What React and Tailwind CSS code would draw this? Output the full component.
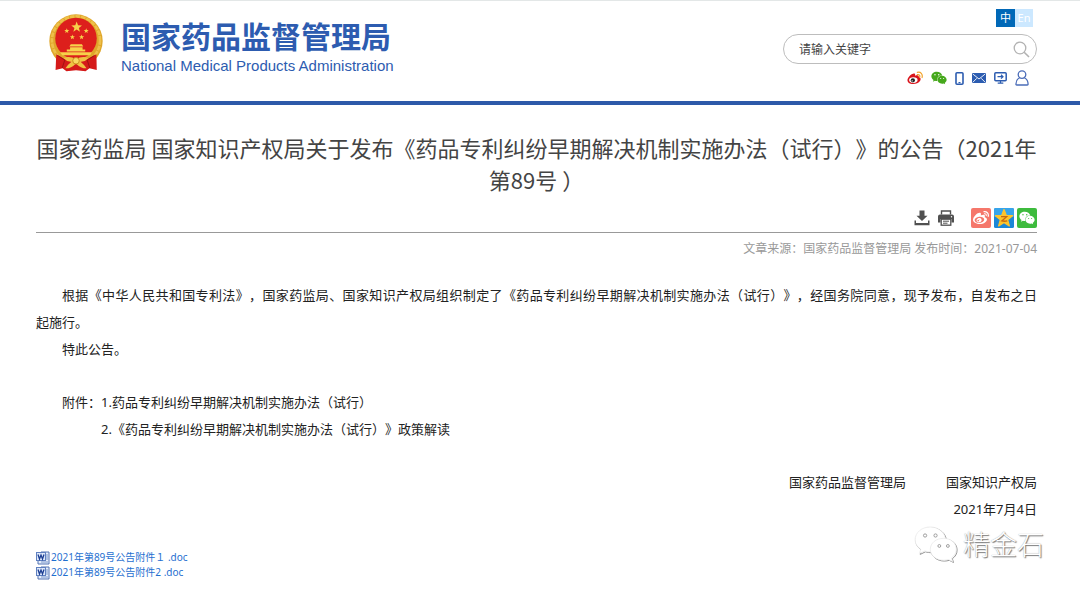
import React from 'react';
import { FaWeibo, FaWeixin } from 'react-icons/fa';

const star = (cx, cy, r) =>
  Array.from({ length: 10 }, (_, i) => {
    const a = (Math.PI / 5) * i - Math.PI / 2;
    const k = i % 2 ? r * 0.42 : r;
    return `${(cx + k * Math.cos(a)).toFixed(2)},${(cy + k * Math.sin(a)).toFixed(2)}`;
  }).join(' ');

function Emblem() {
  return (
    <svg viewBox="0 0 164 176" className="h-[58px] w-[54px] shrink-0" aria-hidden="true">
      <circle cx="82" cy="82" r="81" fill="#dfa62a" />
      <circle cx="82" cy="80" r="73" fill="none" stroke="#eec04a" strokeWidth="8" strokeDasharray="14 3" />
      <circle cx="82" cy="74" r="63" fill="#dd1f1c" />
      <g fill="#f7d24a">
        <polygon points={star(84, 40, 17)} />
        <polygon points={star(54, 51, 8)} />
        <polygon points={star(113, 51, 8)} />
        <polygon points={star(71, 70, 8)} />
        <polygon points={star(99, 70, 8)} />
        <path d="M66 92h34l4 7H62zM64 101h38v7h8v6H54v-6h10zM34 116h96l-5 9H40z" />
      </g>
      <path d="M22 122l24 14 36-4 36 4 26-14 1 48-22-5-12 9-29-3-29 3-12-9-21 5z" fill="#d51a1a" />
      <path d="M44 134q20-8 38 4 18-12 38-4-12 12-24 11 10 8 18 20-18 0-32-15-14 15-32 15 8-12 18-20-12 1-24-11z" fill="#efc143" />
      <circle cx="82" cy="142" r="10" fill="#f8d860" stroke="#c98b1c" strokeWidth="3" />
      <path d="M26 126l22 14-8 24M138 126l-22 14 8 24" fill="none" stroke="#9c1212" strokeWidth="3" />
    </svg>
  );
}

function WeiboColor() {
  return (
    <svg viewBox="0 0 34 28" className="h-[14px] w-4" aria-hidden="true">
      <path d="M13 5c3-1 5 0 4 4 4-2 9-1 8 3 4 1 5 4 3 8-3 5-9 7-15 7C6 27 1 24 1 19 1 13 8 6 13 5z" fill="#d9141b" />
      <ellipse cx="13.500" cy="18.500" rx="9" ry="6" fill="#fff" />
      <circle cx="12.500" cy="19" r="4.500" fill="#222" />
      <circle cx="11" cy="20" r="1.400" fill="#fff" />
      <path d="M22 2c7-2 12 4 10 11M22 7c4-1 6 2 5 5" fill="none" stroke="#f3a32c" strokeWidth="2.600" strokeLinecap="round" />
    </svg>
  );
}

function PhoneIcon() {
  return (
    <svg viewBox="0 0 9 13" className="h-[13px] w-[9px]" aria-hidden="true">
      <rect x="1" y="0.800" width="7" height="11.400" rx="1" fill="none" stroke="#2c5cb0" strokeWidth="1.600" />
      <path d="M3.500 10.600h2" stroke="#2c5cb0" strokeWidth="1.200" />
    </svg>
  );
}

function MailIcon() {
  return (
    <svg viewBox="0 0 14 10" className="h-[10px] w-[14px]" aria-hidden="true">
      <rect width="14" height="10" rx="0.800" fill="#2c5cb0" />
      <path d="M0.800 1l6.200 5 6.200-5M0.800 9.300l4-4M13.200 9.300l-4-4" fill="none" stroke="#fff" strokeWidth="0.900" />
    </svg>
  );
}

function ScreenIcon() {
  return (
    <svg viewBox="0 0 13 12" className="h-[12px] w-[13px]" aria-hidden="true">
      <rect x="0.800" y="0.800" width="11.400" height="7.900" rx="1" fill="none" stroke="#2c5cb0" strokeWidth="1.500" />
      <path d="M3.500 4.700h5.500M7 2.800l2 1.900-2 1.900M6.500 8.700v2M3.700 11.200h5.600" fill="none" stroke="#2c5cb0" strokeWidth="1.200" />
    </svg>
  );
}

function UserIcon() {
  return (
    <svg viewBox="0 0 14 16" className="h-[16px] w-[14px]" aria-hidden="true">
      <circle cx="7" cy="4.600" r="3.800" fill="none" stroke="#4a6cb8" strokeWidth="1.300" />
      <path d="M4.500 8C2 9 1 11 0.900 14.200q0 0.800 0.800 0.800h10.600q0.800 0 0.800-0.800C13 11 12 9 9.500 8" fill="none" stroke="#4a6cb8" strokeWidth="1.300" />
    </svg>
  );
}

function DownloadIcon() {
  return (
    <svg viewBox="0 0 16 16" className="h-4 w-4" aria-hidden="true" fill="#505050">
      <path d="M5.500 0.500h5v5.200h3L8 11 2.500 5.700h3z" />
      <path d="M0.500 10.500H2V13h12v-2.500h1.500v4.800h-15z" />
    </svg>
  );
}

function PrintIcon() {
  return (
    <svg viewBox="0 0 16 16" className="h-4 w-4" aria-hidden="true">
      <path d="M3.500 4.500V1h9v3.500" fill="none" stroke="#505050" strokeWidth="1.400" />
      <path d="M2 4.500h12q2 0 2 2v6h-2.500V9h-11v3.500H0v-6q0-2 2-2z" fill="#505050" />
      <circle cx="13.500" cy="6.700" r="0.700" fill="#fff" />
      <rect x="3.200" y="9.200" width="9.600" height="6" fill="#fff" stroke="#505050" strokeWidth="1.300" />
      <path d="M5 11.200h6M5 13.200h4.500" stroke="#505050" />
    </svg>
  );
}

function QzoneIcon() {
  return (
    <svg viewBox="0 0 20 20" className="h-5 w-5" aria-hidden="true">
      <rect width="20" height="20" rx="1.500" fill="#1c87d6" />
      <rect width="20" height="9" rx="1.500" fill="#37a4ea" />
      <polygon points={star(10, 10.6, 9)} fill="#fdc42c" stroke="#fdc42c" strokeWidth="1.400" strokeLinejoin="round" />
      <path d="M7 8.700h5.600l-4.800 4.200q2.500 0.700 5.400 0" fill="none" stroke="#c8690c" strokeWidth="1.300" />
    </svg>
  );
}

function WordIcon() {
  return (
    <svg viewBox="0 0 14 14" className="h-[14px] w-[14px] shrink-0" aria-hidden="true">
      <path d="M5 1h8v12H2V9" fill="#e6eefb" stroke="#5373b3" />
      <path d="M10 4h2M10 6h2M10 8h2M5 11h7" stroke="#7b97cb" />
      <rect x="0.500" y="1.500" width="9" height="8" fill="#dfe9fb" stroke="#5f80c0" />
      <path d="M2 3.500l1.500 4.500L5 4l1.500 4L8 3.500" fill="none" stroke="#1d3f93" strokeWidth="1.300" />
    </svg>
  );
}

function WatermarkIcon() {
  const shapes = (
    <>
      <path d="M17 1C8 1 1 7 1 14.500c0 4 2 7.500 6 10L5.500 29l5.500-2.700c2 .6 4 .9 6 .9 9 0 16-5.700 16-12.700S26 1 17 1z" />
      <path d="M31 13c-8 0-14 5-14 11.500S23 36 31 36c1.800 0 3.500-.3 5-.8l4.500 2.300-1.200-4c3.200-2.200 5-5.300 5-9C44.300 18 39 13 31 13z" />
    </>
  );
  return (
    <svg viewBox="0 0 46 40" className="h-[38px] w-[44px]" aria-hidden="true">
      <g transform="translate(0.9 0.9)" fill="#fff" stroke="#8c8c8c" strokeWidth="1">{shapes}</g>
      <g fill="#fff" stroke="#e6e6e6" strokeWidth="0.700">{shapes}</g>
      <g fill="#fff" stroke="#8f8f8f" strokeWidth="0.900">
        <circle cx="11.500" cy="10" r="1.700" />
        <circle cx="22.500" cy="10" r="1.700" />
        <circle cx="26.500" cy="21" r="1.500" />
        <circle cx="35.500" cy="21" r="1.500" />
      </g>
    </svg>
  );
}

const quickLinks = [
  { label: '微博', icon: <WeiboColor /> },
  { label: '微信', icon: <FaWeixin className="h-4 w-4 text-[#46a81c]" /> },
  { label: '手机版', icon: <PhoneIcon /> },
  { label: '邮箱', icon: <MailIcon /> },
  { label: '电脑版', icon: <ScreenIcon /> },
  { label: '个人中心', icon: <UserIcon /> },
];

const attachments = ['2021年第89号公告附件１ .doc', '2021年第89号公告附件2 .doc'];

function Header() {
  return (
    <header className="flex items-start justify-between border-t border-b-4 border-t-[#e3e7e7] border-b-[#2d59a9] pr-[43px] pb-[15px] pl-[49px]">
      <a href="#home" className="flex gap-[18px] pt-[13px] text-[#2d5cb0]">
        <Emblem />
        <span className="flex flex-col pt-1">
          <span className="text-[30px] leading-[38px] font-bold">国家药品监督管理局</span>
          <span className="font-['Liberation_Sans',sans-serif] text-[15px] leading-[20px]">National Medical Products Administration</span>
        </span>
      </a>
      <div className="flex w-[254px] flex-col items-end pt-2">
        <div className="mr-1 flex text-[11px] leading-[18px] text-white">
          <button type="button" className="w-[19px] bg-[#0068b7]">中</button>
          <button type="button" className="w-[18px] bg-[#cce8ff]">En</button>
        </div>
        <form className="mt-[7px] flex h-[30px] w-full items-center rounded-full border border-[#bdbdbd] pr-[6px] pl-[15px]" onSubmit={(e) => e.preventDefault()}>
          <input aria-label="请输入关键字" placeholder="请输入关键字" className="min-w-0 flex-1 pt-px text-[12px] outline-none placeholder:text-[#444]" />
          <button type="submit" aria-label="搜索">
            <svg viewBox="0 0 17 17" className="h-[17px] w-[17px]" fill="none" stroke="#b2b2b2" strokeWidth="1.300" aria-hidden="true">
              <circle cx="7" cy="7" r="5.800" />
              <path d="M11.200 11.200l4.800 4.800" strokeWidth="1.600" />
            </svg>
          </button>
        </form>
        <nav className="mt-[6px] mr-2 flex h-4 items-center gap-2">
          {quickLinks.map((l) => (
            <a key={l.label} href="#quick" aria-label={l.label}>{l.icon}</a>
          ))}
        </nav>
      </div>
    </header>
  );
}

export default function App() {
  return (
    <div className="bg-white font-['Noto_Sans','Noto_Sans_CJK_SC',sans-serif] text-[#222] [text-spacing-trim:space-all]" lang="zh-CN">
      <Header />
      <main className="pr-[43px] pl-[36px]">
        <h1 className="pt-[26px] text-center font-['Noto_Sans_CJK_SC',sans-serif] text-[22px] leading-[32px] font-normal text-[#444]">
          国家药监局 国家知识产权局关于发布《药品专利纠纷早期解决机制实施办法（试行）》的公告（2021年
          <br />
          第89号 ）
        </h1>
        <div className="flex items-center justify-end border-b border-[#999] pt-[13px] pb-1">
          <button type="button" aria-label="下载" className="mr-2"><DownloadIcon /></button>
          <button type="button" aria-label="打印" className="mr-[17px]"><PrintIcon /></button>
          <div className="flex gap-[3px]">
            <a href="#weibo" aria-label="分享到微博" className="flex h-5 w-5 items-center justify-center rounded-xs bg-[#f5776b] text-white">
              <FaWeibo className="h-4 w-4" />
            </a>
            <a href="#qzone" aria-label="分享到QQ空间"><QzoneIcon /></a>
            <a href="#wechat" aria-label="分享到微信" className="flex h-5 w-5 items-center justify-center rounded-xs bg-[#3dbb3d] text-white">
              <FaWeixin className="h-4 w-4" />
            </a>
          </div>
        </div>
        <p className="pt-1 text-right text-[12px] leading-[24px] text-[#999]">文章来源：国家药品监督管理局 发布时间：2021-07-04</p>

        <article className="pt-[21px] text-[13px] leading-[27px]">
          <p>
            <span className="block pl-[26px] [text-align-last:justify]">
              根据《中华人民共和国专利法》，国家药监局、国家知识产权局组织制定了《药品专利纠纷早期解决机制实施办法（试行）》，经国务院同意，现予发布，自发布之日
            </span>
            起施行。
          </p>
          <p className="pl-[26px]">特此公告。</p>
          <div className="flex pt-[26px] pl-[26px]">
            <span>附件：</span>
            <div>
              <p>1.药品专利纠纷早期解决机制实施办法（试行）</p>
              <p>2.《药品专利纠纷早期解决机制实施办法（试行）》政策解读</p>
            </div>
          </div>
          <div className="flex justify-end gap-10 pt-[26px]">
            <span>国家药品监督管理局</span>
            <span>国家知识产权局</span>
          </div>
          <p className="text-right">2021年7月4日</p>
        </article>

        <div className="flex items-start justify-between">
          <ul className="pt-[27px] text-[10px] leading-[15px] text-[#1f6fd0]">
            {attachments.map((name) => (
              <li key={name}>
                <a href="#doc" className="flex items-center gap-px">
                  <WordIcon />
                  {name}
                </a>
              </li>
            ))}
          </ul>
          <div className="-mr-[7px] flex items-center gap-[5px] pt-[3px]">
            <WatermarkIcon />
            <span className="text-[27px] leading-[38px] font-light text-white [text-shadow:1px_1px_1px_#777,0_0_1px_#999]">精金石</span>
          </div>
        </div>
      </main>
    </div>
  );
}
